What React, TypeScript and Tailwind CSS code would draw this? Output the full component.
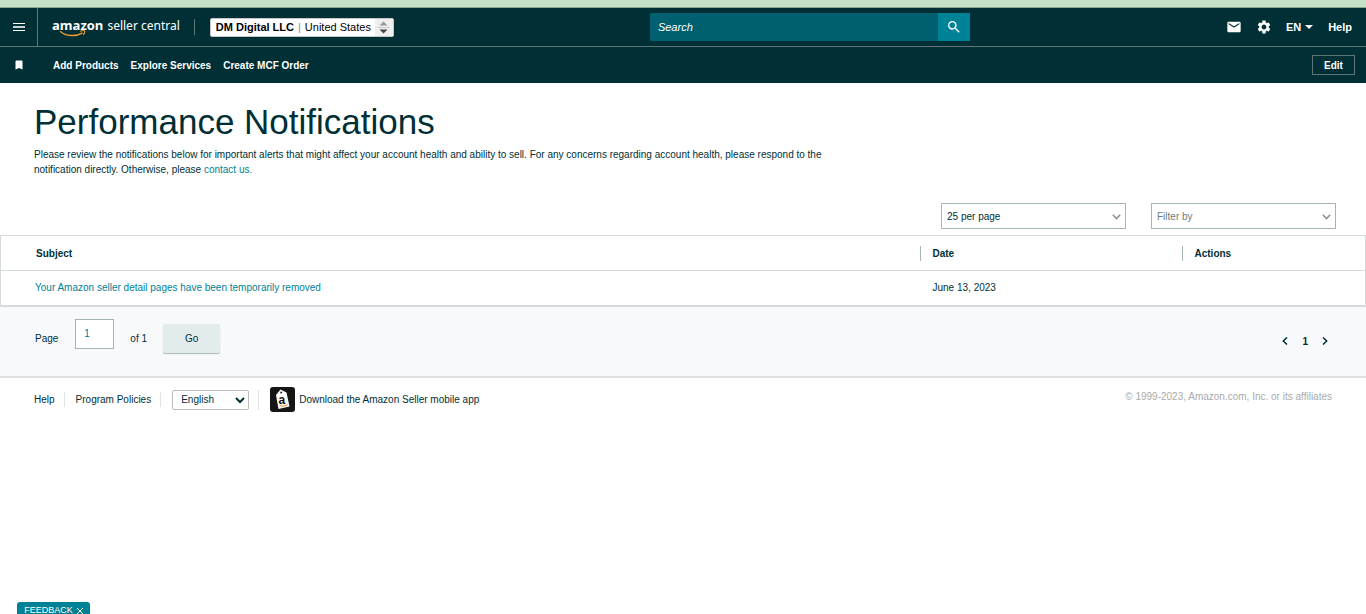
import type { ReactNode } from "react";
import { MdBookmark, MdMail, MdSearch, MdSettings } from "react-icons/md";

type Notification = {
  subject: string;
  date: string;
};

const quickLinks = ["Add Products", "Explore Services", "Create MCF Order"];

const notifications: Notification[] = [
  { subject: "Your Amazon seller detail pages have been temporarily removed", date: "June 13, 2023" },
];

function Logo() {
  return (
    <a href="#" className="relative ml-[14px] flex items-baseline gap-1 whitespace-nowrap pb-1 text-[13px] leading-5 text-white">
      <span className="font-['Open_Sans',sans-serif] font-bold">amazon</span>
      <span className="font-['Noto_Sans',sans-serif] text-[12px]">seller central</span>
      <svg className="absolute left-[7px] top-[15px] h-[7px] w-[28px]" viewBox="0 0 28 7" fill="none" aria-hidden="true">
        <path d="M1 1.2C7 6.6 17 6.8 23.500 2.800" stroke="#f29a2e" strokeWidth="1.4" />
        <path d="M21 1.300C23 .6 25 .5 25.500 1S25.300 3.500 24.300 4.800" stroke="#f29a2e" strokeWidth="1.1" />
      </svg>
    </a>
  );
}

function TopBar() {
  return (
    <header className="bg-[#002f36] text-white">
      <div className="flex h-10 items-center border-b border-t border-b-[#5d7577] border-t-[#8fa695]">
        <button type="button" aria-label="Menu" className="flex h-full w-[38px] items-center justify-center border-r border-[#5d7577]">
          <svg width="12" height="8" viewBox="0 0 12 8" aria-hidden="true">
            <path d="M0 0h12v1H0zM0 7h12v1H0z" fill="#fff" />
            <path d="M0 3h12v2H0z" fill="#c5d0d1" />
          </svg>
        </button>
        <Logo />
        <span className="ml-[14px] h-4 w-px bg-[#5d7577]" />
        <button type="button" aria-haspopup="listbox" className="ml-[15px] flex h-[19px] items-center overflow-hidden whitespace-nowrap rounded-[2px] border border-[#c4c8c8] bg-white pl-[5px] text-[11px] text-black">
          <span className="font-bold">DM Digital LLC</span>
          <span className="mx-1 text-[#888]">|</span>
          <span>United States</span>
          <span className="ml-1 flex h-full w-[18px] items-center justify-center bg-[#efefef]">
            <svg width="13" height="13" viewBox="0 0 13 13" aria-hidden="true">
              <path d="M2.5 4.5L6.5 .5l4 4z" fill="#999" />
              <path d="M0 6h13v1H0z" fill="#ccc" />
              <path d="M2.5 8.5l4 4 4-4z" fill="#444" />
            </svg>
          </span>
        </button>
        <form className="mx-auto flex h-7 w-80">
          <input type="text" aria-label="Search" placeholder="Search" className="min-w-0 flex-1 bg-[#00606f] pl-2 text-[11px] italic text-white outline-none placeholder:text-white" />
          <button type="button" aria-label="Submit search" className="flex w-8 items-center justify-center bg-[#008296]">
            <MdSearch size={16} />
          </button>
        </form>
        <div className="mr-[14px] flex items-center text-[11px] font-bold">
          <button type="button" aria-label="Messages"><MdMail size={16} /></button>
          <button type="button" aria-label="Settings" className="ml-[14px]"><MdSettings size={16} /></button>
          <button type="button" className="ml-[14px] flex items-center gap-1">
            EN
            <svg width="8" height="4" viewBox="0 0 8 4" fill="#fff" aria-hidden="true"><path d="M0 0h8L4 4z" /></svg>
          </button>
          <a href="#" className="ml-[15px]">Help</a>
        </div>
      </div>
      <nav className="flex h-9 items-center pr-[11px] text-[10px] font-bold">
        <button type="button" aria-label="Bookmarks" className="flex w-[38px] justify-center"><MdBookmark size={12} /></button>
        <div className="ml-[15px] flex gap-3">
          {quickLinks.map((link) => (
            <a key={link} href="#">{link}</a>
          ))}
        </div>
        <button type="button" className="ml-auto h-5 w-[43px] border border-[#5d7577]">Edit</button>
      </nav>
    </header>
  );
}

function FilterSelect({ label, className, children }: { label: string; className: string; children: ReactNode }) {
  return (
    <div className="relative">
      <select aria-label={label} className={`h-[26px] w-[185px] appearance-none border border-[#a5b4b4] bg-white pl-[5px] text-[10px] ${className}`}>
        {children}
      </select>
      <svg className="pointer-events-none absolute right-[5px] top-[11px]" width="9" height="6" viewBox="0 0 9 6" fill="none" stroke="#879596" strokeWidth="1.5" aria-hidden="true">
        <path d="M.8.8L4.5 4.6L8.2.8" />
      </svg>
    </div>
  );
}

function NotificationTable() {
  return (
    <table className="w-full table-fixed border border-b-2 border-[#d5dbdb] text-left text-[10px]">
      <thead>
        <tr className="h-[35px] border-b border-[#d5dbdb]">
          <th className="pl-[35px]">Subject</th>
          <th className="w-[262px]"><span className="block border-l border-[#a5b4b4] pl-3">Date</span></th>
          <th className="w-[184px]"><span className="block border-l border-[#a5b4b4] pl-3">Actions</span></th>
        </tr>
      </thead>
      <tbody>
        {notifications.map((item) => (
          <tr key={item.subject} className="h-[35px]">
            <td className="pl-[34px]"><a href="#" className="text-[#008296]">{item.subject}</a></td>
            <td className="pl-[13px]">{item.date}</td>
            <td />
          </tr>
        ))}
      </tbody>
    </table>
  );
}

function Pagination() {
  return (
    <div className="flex h-[71px] justify-between border-b-2 border-[#dde1e4] bg-[#f8f9fb] px-[35px] text-[10px]">
      <form className="flex">
        <label htmlFor="page" className="mt-6">Page</label>
        <input id="page" type="text" defaultValue="1" className="ml-[17px] mt-3 h-[30px] w-[39px] border border-[#a5b4b4] bg-white pl-2 text-[#0073a8]" />
        <span className="ml-4 mt-6">of 1</span>
        <button type="button" className="ml-4 mt-[17px] h-[29px] w-[57px] rounded-[2px] bg-[#e3ecec] shadow-[0_1px_1px_#aab7b8]">Go</button>
      </form>
      <div className="mr-[3px] flex items-center gap-[14px] font-bold">
        <button type="button" aria-label="Previous page">
          <svg width="6" height="8" viewBox="0 0 6 8" fill="none" stroke="#002f36" strokeWidth="1.5"><path d="M5 .5L1.3 4L5 7.5" /></svg>
        </button>
        <span>1</span>
        <button type="button" aria-label="Next page">
          <svg width="6" height="8" viewBox="0 0 6 8" fill="none" stroke="#002f36" strokeWidth="1.5"><path d="M1 .5L4.7 4L1 7.5" /></svg>
        </button>
      </div>
    </div>
  );
}

function AppBadge() {
  return (
    <svg width="25" height="25" viewBox="0 0 25 25" aria-hidden="true">
      <rect width="25" height="25" rx="3" fill="#151515" />
      <path d="M6 8L10.500 2.500L16.500 5.500L19.500 19.500L8.500 22z" fill="#fff" />
      <circle cx="11.2" cy="5.4" r="1" fill="#151515" />
      <text x="8.500" y="16.500" fontSize="12" fontWeight="bold" fill="#111">a</text>
      <path d="M9.500 18.500c3 1.300 5.500.8 8-1" fill="none" stroke="#f29a2e" strokeWidth="1.2" />
    </svg>
  );
}

function Footer() {
  return (
    <footer className="flex items-start justify-between px-[34px] pt-[10px] text-[10px]">
      <div className="flex h-6 items-center">
        <a href="#">Help</a>
        <span className="ml-[9px] h-[15px] w-px bg-[#e0e3e3]" />
        <a href="#" className="ml-[11px]">Program Policies</a>
        <span className="ml-[9px] h-[15px] w-px bg-[#e0e3e3]" />
        <select aria-label="Language" className="ml-[11px] h-5 w-[77px] rounded-[2px] border border-[#bbb] bg-white pl-1 text-[10px]">
          <option>English</option>
        </select>
        <span className="ml-[9px] h-5 w-px bg-[#e0e3e3]" />
        <a href="#" className="ml-[11px] flex items-center gap-1">
          <AppBadge />
          Download the Amazon Seller mobile app
        </a>
      </div>
      <p className="mt-px text-[#aaa]">© 1999-2023, Amazon.com, Inc. or its affiliates</p>
    </footer>
  );
}

export default function App() {
  return (
    <div className="min-h-screen bg-white font-['Liberation_Sans',Arial,sans-serif] text-[10px] leading-[15px] text-[#002f36]">
      <div className="h-[7px] bg-[#c6e2c6]" />
      <TopBar />
      <main>
        <div className="px-[34px] pt-[18px]">
          <h1 className="text-[35px] leading-[42px]">Performance Notifications</h1>
          <p className="mt-1 max-w-[830px]">
            Please review the notifications below for important alerts that might affect your account health and ability
            to sell. For any concerns regarding account health, please respond to the notification directly. Otherwise,
            please <a href="#" className="text-[#008296]">contact us.</a>
          </p>
        </div>
        <div className="mb-[6px] mt-[26px] flex justify-end gap-[25px] pr-[30px]">
          <FilterSelect label="Results per page" className="text-[#002f36]">
            <option>25 per page</option>
          </FilterSelect>
          <FilterSelect label="Filter" className="text-[#6b7b7d]">
            <option>Filter by</option>
          </FilterSelect>
        </div>
        <NotificationTable />
        <Pagination />
      </main>
      <Footer />
      <button type="button" className="fixed bottom-0 left-[17px] flex h-3 w-[73px] items-start justify-center gap-1 overflow-hidden rounded-t-[3px] bg-[#008296] pt-[1px] text-[9px] text-white">
        FEEDBACK
        <svg className="mt-[5px]" width="6" height="6" viewBox="0 0 6 6" stroke="#fff" aria-hidden="true"><path d="M0 0l6 6M6 0L0 6" /></svg>
      </button>
    </div>
  );
}
